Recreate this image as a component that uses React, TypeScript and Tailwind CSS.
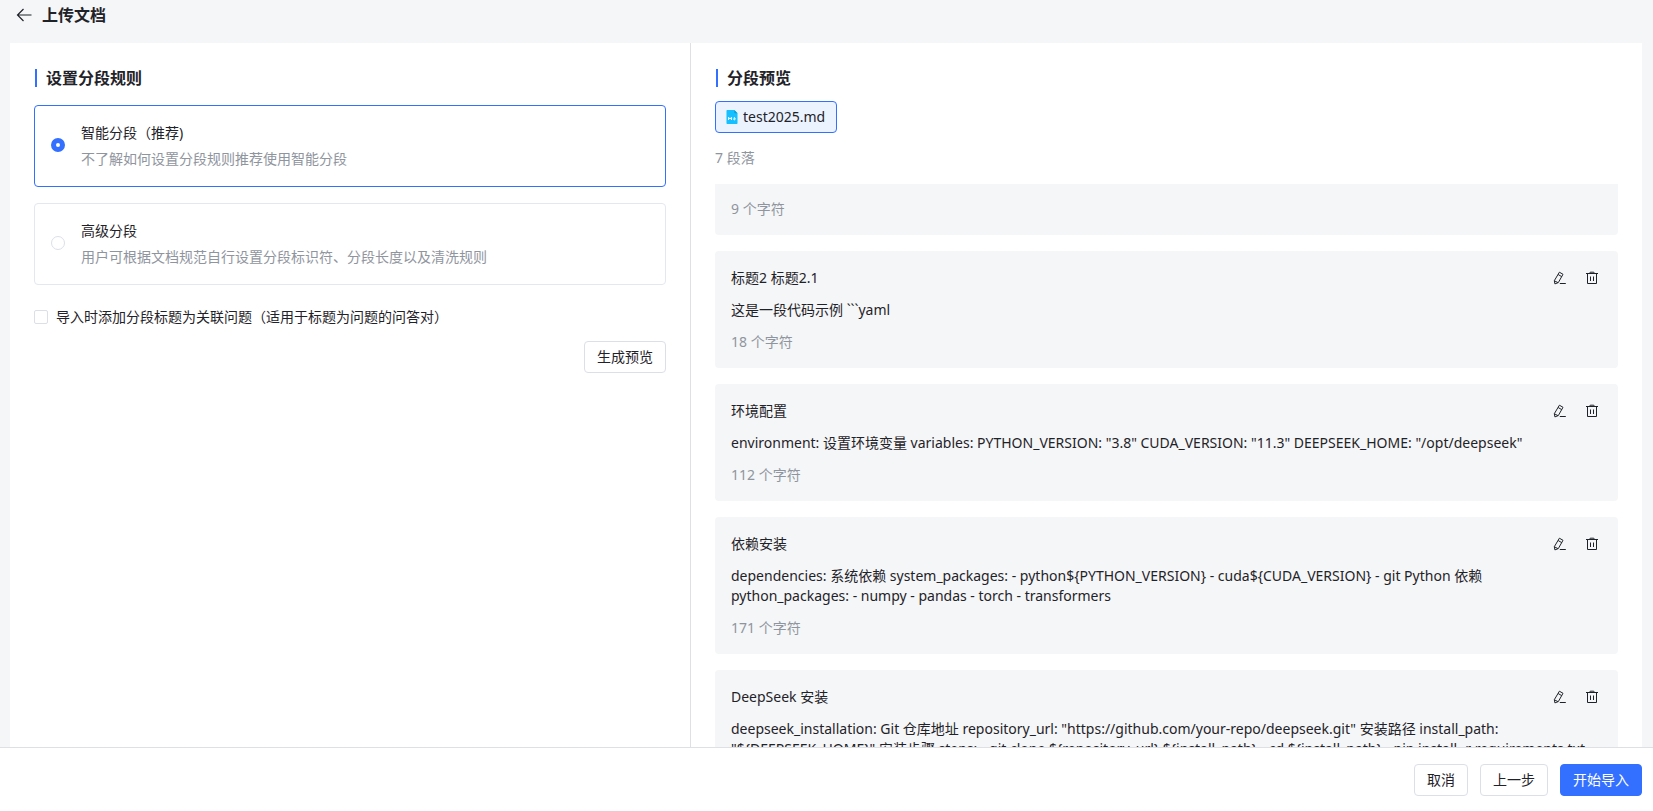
import { useState } from "react";

interface Paragraph {
  title: string;
  content: string;
  count: number;
}

const paragraphs: Paragraph[] = [
  { title: "标题2 标题2.1", content: "这是一段代码示例 ```yaml", count: 18 },
  {
    title: "环境配置",
    content:
      'environment: 设置环境变量 variables: PYTHON_VERSION: "3.8" CUDA_VERSION: "11.3" DEEPSEEK_HOME: "/opt/deepseek"',
    count: 112,
  },
  {
    title: "依赖安装",
    content:
      "dependencies: 系统依赖 system_packages: - python${PYTHON_VERSION} - cuda${CUDA_VERSION} - git Python 依赖 python_packages: - numpy - pandas - torch - transformers",
    count: 171,
  },
  {
    title: "DeepSeek 安装",
    content:
      'deepseek_installation: Git 仓库地址 repository_url: "https://github.com/your-repo/deepseek.git" 安装路径 install_path: "${DEEPSEEK_HOME}" 安装步骤 steps: - git clone ${repository_url} ${install_path} - cd ${install_path} - pip install -r requirements.txt',
    count: 238,
  },
];

const rules = [
  {
    value: "smart",
    label: "智能分段（推荐)",
    description: "不了解如何设置分段规则推荐使用智能分段",
  },
  {
    value: "advanced",
    label: "高级分段",
    description: "用户可根据文档规范自行设置分段标识符、分段长度以及清洗规则",
  },
];

function BackIcon() {
  return (
    <svg className="h-4 w-4" viewBox="0 0 16 16" fill="none" stroke="currentColor" strokeWidth="1.2" aria-hidden="true">
      <path d="M15.5 8H1.5M7.5 2L1.5 8l6 6" />
    </svg>
  );
}

function EditIcon() {
  return (
    <svg className="h-3.5 w-3.5" viewBox="0 0 14 14" fill="none" stroke="currentColor" aria-hidden="true">
      <path d="M6.4 1.2l3.6 2.1-4.7 8.3-3.4 1.3-.6-3.2z" strokeLinejoin="round" />
      <path d="M5.1 3.5l3.6 2.1M1.4 9.8l3.7 1.9M6.8 12.5h6" />
    </svg>
  );
}

function DeleteIcon() {
  return (
    <svg className="h-3.5 w-3.5" viewBox="0 0 14 14" fill="none" stroke="currentColor" aria-hidden="true">
      <path d="M1 2.5h12M4.5 2.5l.7-1.3h3.6l.7 1.3M2.5 2.5v10h9v-10M5.5 5.5v4.5M8.5 5.5v4.5" />
    </svg>
  );
}

function MarkdownIcon() {
  return (
    <svg className="h-4 w-4" viewBox="0 0 16 16" aria-hidden="true">
      <path d="M3.3 1h7l3.2 3.2v10.1a.7.7 0 0 1-.7.7H3.2a.7.7 0 0 1-.7-.7V1.7a.7.7 0 0 1 .8-.7z" fill="#14c0ff" />
      <path d="M10.3 1l3.2 3.2h-2.6a.6.6 0 0 1-.6-.6z" fill="#049fd7" />
      <path d="M4.5 11V8.2l1.5 1.9 1.5-1.9V11M10.4 8v2.6M8.9 9.5l1.5 1.4 1.5-1.4" fill="none" stroke="#fff" strokeWidth=".9" />
    </svg>
  );
}

function SectionTitle({ children }: { children: string }) {
  return (
    <h4 className="flex items-center gap-[9px] pl-px text-base leading-6 font-bold">
      <span className="h-[18px] w-0.5 bg-[#3370ff]" />
      {children}
    </h4>
  );
}

function ParagraphCard({ title, content, count }: Paragraph) {
  return (
    <article className="rounded bg-[#f5f6f7] p-4">
      <div className="flex items-center justify-between">
        <h5 className="leading-[21px]">{title}</h5>
        <div className="flex gap-[18px] pr-[3px] text-[#1f2329]">
          <button type="button" aria-label="编辑">
            <EditIcon />
          </button>
          <button type="button" aria-label="删除">
            <DeleteIcon />
          </button>
        </div>
      </div>
      <p className="mt-3 leading-5">{content}</p>
      <p className="mt-3 leading-5 text-[#8f959e]">{count} 个字符</p>
    </article>
  );
}

export default function App() {
  const [rule, setRule] = useState("smart");
  const [withTitle, setWithTitle] = useState(false);

  return (
    <div className="flex h-screen flex-col bg-[#f5f6f7] font-['Noto_Sans','Noto_Sans_CJK_SC',sans-serif] text-sm text-[#1f2329]">
      <header className="flex h-[43px] shrink-0 items-start gap-2.5 px-4 pt-[3px]">
        <button type="button" aria-label="返回" className="flex h-6 items-center">
          <BackIcon />
        </button>
        <h1 className="text-base leading-6 font-bold">上传文档</h1>
      </header>

      <main className="mr-[11px] ml-2.5 grid min-h-0 flex-1 grid-cols-12 bg-white">
        <section className="col-span-5 px-6 pt-[23px]">
          <SectionTitle>设置分段规则</SectionTitle>
          <div className="mt-[15px] space-y-4">
            {rules.map((item) => (
              <label
                key={item.value}
                className={`flex h-[82px] items-center gap-4 rounded border px-4 pb-0.5 ${
                  rule === item.value ? "border-[#3370ff]" : "border-[#e4e7ed]"
                }`}
              >
                <input
                  type="radio"
                  name="rule"
                  value={item.value}
                  checked={rule === item.value}
                  onChange={() => setRule(item.value)}
                  className="h-3.5 w-3.5 shrink-0 appearance-none rounded-full border border-[#dcdfe6] bg-white checked:border-5 checked:border-[#3370ff]"
                />
                <span className="pt-0.5">
                  <span className="block leading-[22px]">{item.label}</span>
                  <span className="mt-1 block leading-[22px] text-[#8f959e]">{item.description}</span>
                </span>
              </label>
            ))}
          </div>
          <label className="mt-4 flex h-8 items-center gap-2">
            <input
              type="checkbox"
              checked={withTitle}
              onChange={(e) => setWithTitle(e.target.checked)}
              className="h-3.5 w-3.5 appearance-none rounded-xs border border-[#dcdfe6] bg-white checked:border-[#3370ff] checked:bg-[#3370ff]"
            />
            导入时添加分段标题为关联问题（适用于标题为问题的问答对）
          </label>
          <div className="mt-2 flex justify-end">
            <button type="button" className="h-8 rounded border border-[#dcdfe6] bg-white px-3">
              生成预览
            </button>
          </div>
        </section>

        <section className="col-span-7 flex min-h-0 flex-col border-l border-[#dee0e3] px-6 pt-[23px]">
          <SectionTitle>分段预览</SectionTitle>
          <div className="mt-[11px] flex shrink-0">
            <button
              type="button"
              className="flex h-8 items-center gap-[3px] rounded border border-[#3370ff] bg-[#ebf3ff] pr-[11px] pl-2 text-sm"
            >
              <MarkdownIcon />
              test2025.md
            </button>
          </div>
          <p className="mt-[15px] leading-5 text-[#8f959e]">7 段落</p>
          <div className="mt-4 min-h-0 flex-1 space-y-4 overflow-hidden">
            <article className="rounded-b bg-[#f5f6f7] px-4 pt-[15px] pb-4">
              <p className="leading-5 text-[#8f959e]">9 个字符</p>
            </article>
            {paragraphs.map((item) => (
              <ParagraphCard key={item.title} {...item} />
            ))}
          </div>
        </section>
      </main>

      <footer className="flex h-16 shrink-0 items-center justify-end gap-3 border-t border-[#dee0e3] bg-white pr-[11px] pl-4">
        <button type="button" className="h-8 rounded border border-[#dcdfe6] bg-white px-3">
          取消
        </button>
        <button type="button" className="h-8 rounded border border-[#dcdfe6] bg-white px-3">
          上一步
        </button>
        <button type="button" className="h-8 rounded border border-[#3370ff] bg-[#3370ff] px-3 text-white">
          开始导入
        </button>
      </footer>
    </div>
  );
}
